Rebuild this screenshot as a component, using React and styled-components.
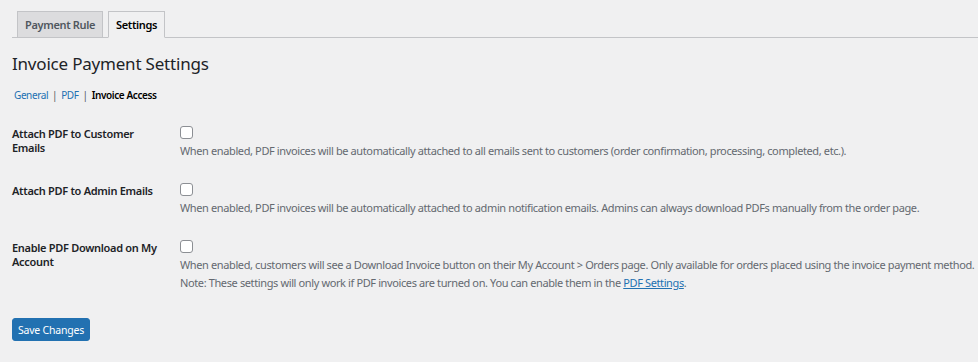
import React from "react";
import styled, { createGlobalStyle } from "styled-components";

const Global = createGlobalStyle`
  html, body {
    margin: 0;
    background: #f0f0f1;
  }
  body {
    font-family: "Noto Sans", "Open Sans", sans-serif;
    font-size: 13px;
    color: #1d2327;
  }
`;

const Wrap = styled.div`
  padding: 11px 0 0 12px;
  width: 966px;
`;

const Tabs = styled.nav`
  display: flex;
  gap: 5px;
  padding-left: 5px;
  border-bottom: 1px solid #c3c4c7;
  height: 26px;
`;

const Tab = styled.a`
  display: block;
  box-sizing: border-box;
  height: 27px;
  line-height: 25px;
  padding: 0 7px;
  font-size: 11px;
  font-weight: 600;
  letter-spacing: -0.35px;
  border: 1px solid #c3c4c7;
  border-bottom-color: ${(p) => (p.$active ? "#f0f0f1" : "#c3c4c7")};
  background: ${(p) => (p.$active ? "#f0f0f1" : "#dcdcde")};
  color: ${(p) => (p.$active ? "#000" : "#50575e")};
  text-decoration: none;
`;

const Title = styled.h1`
  margin: 11px 0 0;
  font-size: 17px;
  font-weight: 400;
  letter-spacing: -0.2px;
  color: #1d2327;
  line-height: 30px;
`;

const SubNav = styled.ul`
  display: flex;
  list-style: none;
  margin: 8px 0 0;
  padding: 0 0 0 2px;
  font-size: 10px;
  letter-spacing: -0.4px;
  line-height: 16px;
  color: #50575e;
`;

const SubItem = styled.li`
  &:not(:last-child)::after {
    content: "|";
    margin: 0 4px;
    color: #50575e;
  }
`;

const SubLink = styled.a`
  color: ${(p) => (p.$current ? "#000" : "#2271b1")};
  font-weight: ${(p) => (p.$current ? 600 : 400)};
  text-decoration: none;
`;

const Form = styled.div`
  margin-top: 21px;
  display: flex;
  flex-direction: column;
`;

const Row = styled.div`
  display: grid;
  grid-template-columns: 168px 1fr;
  padding-bottom: ${(p) => (p.$last ? "0" : "22px")};
`;

const Label = styled.label`
  font-size: 11px;
  font-weight: 600;
  letter-spacing: -0.3px;
  line-height: 14px;
  padding-top: 3px;
  color: #1d2327;
  width: 154px;
`;

const Field = styled.div`
  display: flex;
  flex-direction: column;
  align-items: flex-start;
`;

const Check = styled.span`
  display: block;
  width: 11px;
  height: 11px;
  border: 1px solid #8c8f94;
  border-radius: 3px;
  background: #fff;
  margin-top: 2px;
`;

const Desc = styled.p`
  margin: 4px 0 0;
  font-size: 11px;
  letter-spacing: -0.38px;
  line-height: 16px;
  color: #646970;
  white-space: nowrap;
  & + & {
    margin-top: 2px;
  }
`;

const Link = styled.a`
  color: #2271b1;
  text-decoration: underline;
`;

const Button = styled.button`
  display: block;
  margin-top: 27px;
  width: 78px;
  height: 23px;
  border: 1px solid #2271b1;
  border-radius: 3px;
  background: #2271b1;
  color: #fff;
  font-family: inherit;
  font-size: 10.5px;
  letter-spacing: -0.2px;
  padding: 0;
`;

const rows = [
  {
    label: "Attach PDF to Customer Emails",
    desc: "When enabled, PDF invoices will be automatically attached to all emails sent to customers (order confirmation, processing, completed, etc.).",
  },
  {
    label: "Attach PDF to Admin Emails",
    desc: "When enabled, PDF invoices will be automatically attached to admin notification emails. Admins can always download PDFs manually from the order page.",
  },
  {
    label: "Enable PDF Download on My Account",
    desc: "When enabled, customers will see a Download Invoice button on their My Account > Orders page. Only available for orders placed using the invoice payment method.",
    note: true,
  },
];

export default function App() {
  return (
    <>
      <Global />
      <Wrap>
        <Tabs>
          <Tab href="#">Payment Rule</Tab>
          <Tab href="#" $active>Settings</Tab>
        </Tabs>
        <Title>Invoice Payment Settings</Title>
        <SubNav>
          <SubItem><SubLink href="#">General</SubLink></SubItem>
          <SubItem><SubLink href="#">PDF</SubLink></SubItem>
          <SubItem><SubLink $current>Invoice Access</SubLink></SubItem>
        </SubNav>
        <Form>
          {rows.map((r) => (
            <Row key={r.label} $last={r.note}>
              <Label>{r.label}</Label>
              <Field>
                <Check />
                <Desc>{r.desc}</Desc>
                {r.note && (
                  <Desc>
                    Note: These settings will only work if PDF invoices are turned on. You can enable them in the{" "}
                    <Link href="#">PDF Settings</Link>.
                  </Desc>
                )}
              </Field>
            </Row>
          ))}
        </Form>
        <Button>Save Changes</Button>
      </Wrap>
    </>
  );
}
